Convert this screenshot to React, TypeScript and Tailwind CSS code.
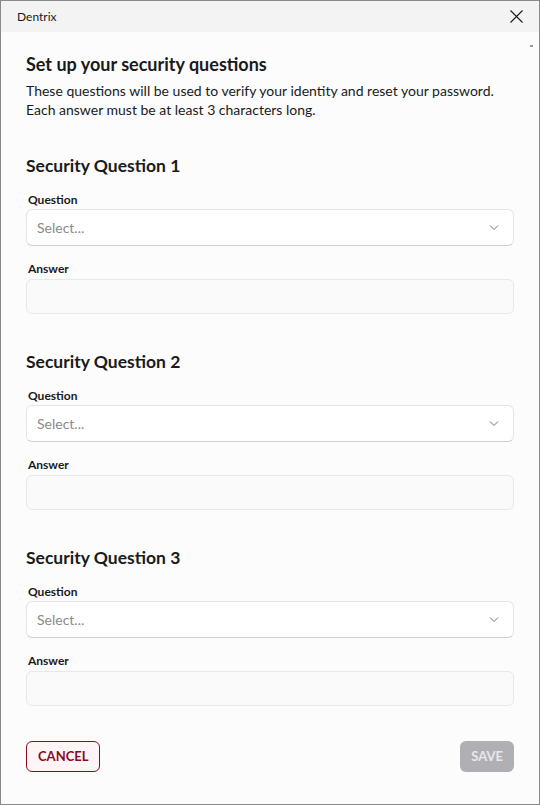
import React from 'react';

const font = { fontFamily: 'Lato, "Segoe UI", sans-serif' };

const ChevronDown = () => (
  <svg width="10" height="6" viewBox="0 0 10 6" className="text-gray-500">
    <path d="M1 0.5 L5 4.5 L9 0.5" fill="none" stroke="currentColor" strokeWidth="1" />
  </svg>
);

const QuestionBlock: React.FC<{ index: number; first?: boolean }> = ({ index, first }) => (
  <div className={first ? 'mt-[36px]' : 'mt-[37px]'}>
    <h2 className="text-[17.5px] font-bold leading-[22px] text-[#1a1a1a]">Security Question {index}</h2>
    <label className="mt-[15px] block text-[12px] font-bold leading-[16px] text-[#1a1a1a] pl-[2px]">Question</label>
    <div className="mt-[1px] flex h-[37px] items-center justify-between rounded-[6px] border border-[#e5e5e5] border-b-[#d0d0d0] bg-white pl-[10px] pr-[14px]">
      <span className="text-[14px] text-[#8a8a8a]">Select...</span>
      <ChevronDown />
    </div>
    <label className="mt-[15px] block text-[12px] font-bold leading-[16px] text-[#1a1a1a] pl-[2px]">Answer</label>
    <div className="mt-[2px] h-[35px] rounded-[6px] border border-[#e8e8e8] bg-[#fafafa]" />
  </div>
);

export default function App() {
  return (
    <div style={font} className="h-[805px] w-[540px] border border-[#8a8a8a] bg-[#fcfcfc] flex flex-col">
      <div className="flex h-[31px] items-center justify-between bg-[#f3f3f3] pl-[16px] pr-[16px]">
        <span className="text-[12px] text-[#1a1a1a]">Dentrix</span>
        <svg width="13" height="13" viewBox="0 0 13 13">
          <path d="M0.5 0.5 L12.5 12.5 M12.5 0.5 L0.5 12.5" stroke="#1a1a1a" strokeWidth="1.1" />
        </svg>
      </div>
      <div className="relative flex flex-1 flex-col px-[25px]">
        <div className="absolute right-[6px] top-[13px] h-[2px] w-[3px] bg-[#9a9a9a]" />
        <h1 className="mt-[21px] text-[18px] font-bold leading-[23px] text-[#1a1a1a]">Set up your security questions</h1>
        <p className="mt-[5px] text-[14px] leading-[19px] text-[#1a1a1a]">
          These questions will be used to verify your identity and reset your password.
          <br />
          Each answer must be at least 3 characters long.
        </p>
        <QuestionBlock index={1} first />
        <QuestionBlock index={2} />
        <QuestionBlock index={3} />
        <div className="mt-[35px] flex items-center justify-between">
          <button className="h-[31px] rounded-[6px] border border-[#8b0a1e] bg-[#fff5f6] px-[11px] text-[13px] font-bold text-[#8b0a1e]">
            CANCEL
          </button>
          <button className="h-[31px] rounded-[6px] bg-[#b0b0b4] px-[11px] text-[13px] font-bold text-[#e8e8ea]">
            SAVE
          </button>
        </div>
      </div>
    </div>
  );
}
